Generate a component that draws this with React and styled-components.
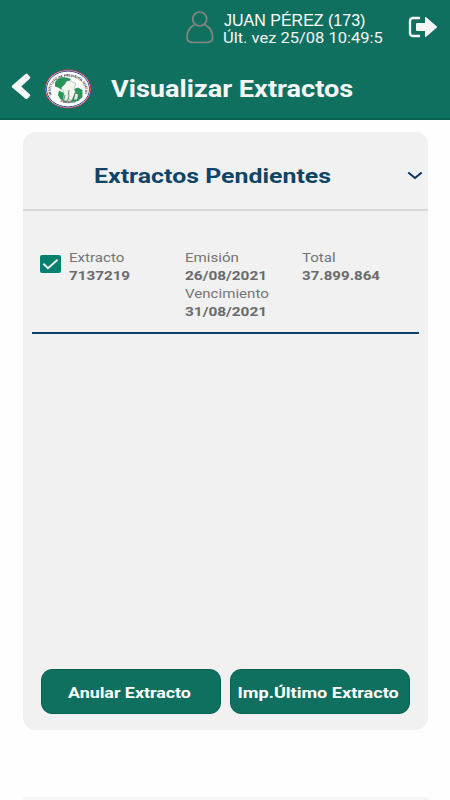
import React, { useState } from "react";
import styled, { createGlobalStyle } from "styled-components";

const GlobalStyle = createGlobalStyle`
  * {
    box-sizing: border-box;
  }
  body {
    margin: 0;
    background: #fefefe;
    font-family: Roboto, "Liberation Sans", sans-serif;
  }
`;

const Screen = styled.div`
  width: 450px;
  height: 800px;
  display: flex;
  flex-direction: column;
  align-items: center;
  overflow: hidden;
`;

const Header = styled.header`
  width: 100%;
  height: 120px;
  flex-shrink: 0;
  color: #f5f5f5;
  background: #107060;
  border-bottom: 2px solid #06614f;
`;

const UserBar = styled.div`
  height: 56px;
  display: flex;
  align-items: flex-start;
  padding: 11px 12px 0 186px;
`;

const UserInfo = styled.div`
  flex: 1;
  margin: 1px 0 0 9px;
`;

// Wide lettering: the font is stretched sideways from its left edge
const Wide = styled.span`
  display: inline-block;
  white-space: nowrap;
  transform: scaleX(${(props) => props.$x});
  transform-origin: ${(props) => props.$origin || "left"} center;
`;

const UserName = styled.div`
  font: 16px/17px "Liberation Sans", Arial, sans-serif;
  color: white;
  margin-left: 1px;
`;

const LastVisit = styled.div`
  font-size: 15px;
  line-height: 19px;
`;

const IconButton = styled.button`
  display: flex;
  padding: 0;
  border: none;
  background: none;
  color: inherit;
`;

const LogoutButton = styled(IconButton)`
  margin-top: 5px;
`;

const BackButton = styled(IconButton)`
  margin-bottom: 5px;
`;

const TitleBar = styled.div`
  height: 62px;
  display: flex;
  align-items: center;
  padding: 4px 0 0 11px;
`;

const Logo = styled.svg`
  margin: 0 19px 0 13px;
`;

const Title = styled.h1`
  margin: 0;
  font-size: 24px;
  line-height: 28px;
`;

const Card = styled.main`
  width: 405px;
  height: 598px;
  margin: 12px 0 0;
  flex-shrink: 0;
  display: flex;
  flex-direction: column;
  border-radius: 13px;
  background: #f1f1f1;
`;

const CardHeader = styled.div`
  height: 79px;
  display: flex;
  align-items: center;
  padding: 10px 5px 0 71px;
  border-bottom: 2px solid #d9d9d9;
  color: #0e4465;
`;

const CardTitle = styled.h2`
  flex: 1;
  margin: 0;
  font-size: 21px;
  line-height: 26px;
`;

const Extract = styled.div`
  height: 123px;
  display: grid;
  grid-template-columns: 37px 116px 117px 1fr;
  margin: 0 9px;
  padding-top: 38px;
  border-bottom: 2px solid #103f68;
  color: #757575;
`;

const Checkbox = styled.button`
  width: 21px;
  height: 18px;
  display: flex;
  margin: 6px 0 0 8px;
  padding: 0;
  border: none;
  border-radius: 2px;
  background: #03806e;
`;

const Label = styled.div`
  font-size: 13px;
  line-height: 18px;
`;

const Value = styled(Label)`
  font-weight: 700;
  color: #6b6b6b;
`;

const Actions = styled.div`
  display: flex;
  gap: 9px;
  margin: auto 18px 16px;
`;

const ActionButton = styled.button`
  width: 180px;
  height: 45px;
  padding: 2px 2px 0 0;
  border: 1px solid #05634f;
  border-radius: 11px;
  background: #107060;
  color: white;
  font: 700 15.5px/20px Roboto, sans-serif;
`;

const Footer = styled.div`
  width: 405px;
  margin-top: auto;
  height: 3px;
  background: #f7f7f7;
`;

const extracts = [
  {
    number: "7137219",
    issued: "26/08/2021",
    due: "31/08/2021",
    total: "37.899.864",
  },
];

const UserIcon = () => (
  <svg width="28" height="33" viewBox="0 0 28 33" fill="none" stroke="#858581" strokeWidth="1.7">
    <ellipse cx="13.7" cy="8" rx="7" ry="7" />
    <path d="M8.3 13.7C4 16.2 1 20.2 1 26.3C1 30 2.5 31.5 7 31.5H20.5C25 31.5 26.6 30 26.6 26.3C26.6 20.2 23.5 16.2 19 13.7" />
  </svg>
);

const LogoutIcon = () => (
  <svg width="30" height="22" viewBox="0 0 30 22">
    <path d="M12 2H5Q2 2 2 5V17Q2 20 5 20H12" fill="none" stroke="currentColor" strokeWidth="2.3" />
    <path d="M8 8Q8 7 9 7H17V2Q17 .5 18.5 1.5L28.6 10.2Q29.5 11 28.6 11.8L18.5 20.5Q17 21.5 17 20V15H9Q8 15 8 14Z" fill="currentColor" />
  </svg>
);

const BackIcon = () => (
  <svg width="20" height="27" viewBox="0 0 20 27">
    <path d="M1.2 12.6L14.5 1Q15.5.2 16.4 1L19 3.7Q19.8 4.6 18.9 5.5L10.3 13.4L18.9 21.4Q19.8 22.3 19 23.1L16.4 25.8Q15.5 26.6 14.5 25.8L1.2 14.4Q.2 13.5 1.2 12.6Z" fill="currentColor" />
  </svg>
);

const InstituteLogo = () => (
  <Logo width="48" height="40" viewBox="0 0 48 40">
    <defs>
      <path id="arc-top" d="M7.6 26A17.3 14 0 1 1 40.4 26" />
      <path id="arc-bottom" d="M10.5 29A18 15.6 0 0 0 37.5 29" />
    </defs>
    <ellipse cx="24" cy="20" rx="23.2" ry="19.4" fill="#c83746" />
    <ellipse cx="24" cy="20" rx="22.3" ry="18.6" fill="#fff" />
    <ellipse cx="24" cy="20" rx="21.5" ry="17.9" fill="#fff" stroke="#294e94" strokeWidth="1" />
    <g fill="#333" fontFamily="Roboto, sans-serif" fontSize="3.4" fontWeight="700">
      <text>
        <textPath href="#arc-top" textLength="57" lengthAdjust="spacingAndGlyphs">INSTITUTO DE PREVISION SOCIAL</textPath>
      </text>
      <text>
        <textPath href="#arc-bottom" startOffset="7" textLength="20" lengthAdjust="spacingAndGlyphs">PARAGUAY</textPath>
      </text>
    </g>
    <path d="M11 14Q12 10 17 8.5Q22 7.5 27 10L24 14L22 17L20 20L17 20.5L14 18.5L11 17.5Z" fill="#25955a" />
    <path d="M30 20L34 18.5L38.5 21V28L34 32L27 33ZM15 21.5L20 24L21 32L16 30L14 26Z" fill="#25955a" />
    <path d="M21 15Q22 10.5 27 12L32 15L30 19L31.5 23L28 31H25L24 25L22 31H19L20 23L17 19Z" fill="#f4f6ee" stroke="#5b7662" strokeWidth=".4" />
    <path d="M25 21Q24 24 25 27L23.5 32H19.5L21 26M31 24L34.5 25L33.5 31L29.5 31Z" fill="#e5eee6" stroke="#286744" strokeWidth=".7" />
  </Logo>
);

const ChevronIcon = () => (
  <svg width="16" height="10" viewBox="0 0 16 10" fill="none" stroke="#0b3560" strokeWidth="2">
    <path d="M1.3 1.4L8 6.9L14.7 1.4" />
  </svg>
);

const CheckIcon = () => (
  <svg width="21" height="18" viewBox="0 0 21 18" fill="none" stroke="#f5f5f5" strokeWidth="1.9">
    <path d="M3.4 8.8L8 13.2L17.6 4.8" />
  </svg>
);

const ExtractRow = ({ extract }) => {
  const [checked, setChecked] = useState(true);
  return (
    <Extract>
      <Checkbox role="checkbox" aria-checked={checked} onClick={() => setChecked(!checked)}>
        {checked && <CheckIcon />}
      </Checkbox>
      <div>
        <Label><Wide $x={1.16}>Extracto</Wide></Label>
        <Value><Wide $x={1.17}>{extract.number}</Wide></Value>
      </div>
      <div>
        <Label><Wide $x={1.16}>Emisión</Wide></Label>
        <Value><Wide $x={1.185}>{extract.issued}</Wide></Value>
        <Label><Wide $x={1.16}>Vencimiento</Wide></Label>
        <Value><Wide $x={1.185}>{extract.due}</Wide></Value>
      </div>
      <div>
        <Label><Wide $x={1.16}>Total</Wide></Label>
        <Value><Wide $x={1.16}>{extract.total}</Wide></Value>
      </div>
    </Extract>
  );
};

const App = () => {
  return (
    <>
      <GlobalStyle />
      <Screen>
        <Header>
          <UserBar>
            <UserIcon />
            <UserInfo>
              <UserName>JUAN PÉREZ (173)</UserName>
              <LastVisit><Wide $x={1.1}>Últ. vez 25/08 10:49:5</Wide></LastVisit>
            </UserInfo>
            <LogoutButton><LogoutIcon /></LogoutButton>
          </UserBar>
          <TitleBar>
            <BackButton><BackIcon /></BackButton>
            <InstituteLogo />
            <Title><Wide $x={1.13}>Visualizar Extractos</Wide></Title>
          </TitleBar>
        </Header>
        <Card>
          <CardHeader>
            <CardTitle><Wide $x={1.185}>Extractos Pendientes</Wide></CardTitle>
            <IconButton><ChevronIcon /></IconButton>
          </CardHeader>
          {extracts.map((extract) => (
            <ExtractRow key={extract.number} extract={extract} />
          ))}
          <Actions>
            <ActionButton><Wide $x={1.15} $origin="center">Anular Extracto</Wide></ActionButton>
            <ActionButton><Wide $x={1.165} $origin="center">Imp.Último Extracto</Wide></ActionButton>
          </Actions>
        </Card>
        <Footer />
      </Screen>
    </>
  );
};

export default App;
